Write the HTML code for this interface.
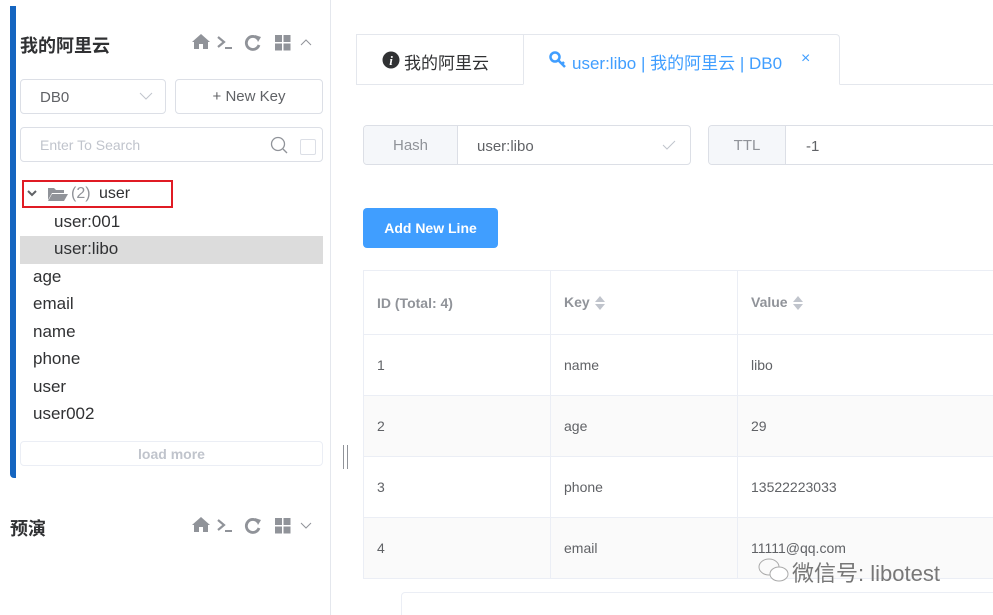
<!DOCTYPE html><html><head><meta charset="utf-8"><style>
*{box-sizing:border-box;margin:0;padding:0}
html,body{width:993px;height:615px;overflow:hidden}
body{background:#fff;font-family:"Liberation Sans","Noto Sans CJK SC",sans-serif;color:#606266;position:relative}
.a{position:absolute}
.bx{position:absolute;border:1px solid #dcdfe6;border-radius:4px;background:#fff}
.row{position:absolute;left:33px;font-size:17px;color:#303133}
td{border-right:1px solid #ebeef5;border-bottom:1px solid #ebeef5;padding-left:13px;font-size:14px;color:#606266}
.srt{display:inline-block;vertical-align:middle;margin-left:4px}
</style></head><body>
<div class="a" style="left:330px;top:0;width:1px;height:615px;background:#e4e7ed"></div>
<div class="a" style="left:10px;top:6px;width:6px;height:472px;background:#1565c0;border-radius:0 0 0 4px"></div>
<div class="a" style="left:20px;top:32px;font-size:18px;font-weight:bold;color:#303133">我的阿里云</div>
<svg class="a" style="left:192px;top:33px" width="125" height="18" viewBox="0 0 125 18" fill="#909399" stroke="#909399">
<path d="M0 9L9 1L18 9H16V16H11V11H7V16H2V9Z" stroke="none"/>
<path d="M26 4L32 9L26 14" fill="none" stroke-width="2.2"/><path d="M33 15H40" stroke-width="2"/>
<path d="M66 6A6.5 6.5 0 1 0 67 12" fill="none" stroke-width="2.8"/><path d="M63 2L69 4L66 9Z" stroke="none"/>
<rect x="83" y="2" width="7" height="7" stroke="none"/><rect x="91.5" y="2" width="7" height="7" stroke="none"/><rect x="83" y="10.5" width="7" height="7" stroke="none"/><rect x="91.5" y="10.5" width="7" height="7" stroke="none"/>
<path d="M109 12L114 7L119 12" fill="none" stroke-width="1"/></svg>
<div class="bx" style="left:20px;top:79px;width:146px;height:35px"><span class="a" style="left:19px;top:9px;font-size:15px">DB0</span><svg class="a" style="left:118px;top:11px" width="14" height="10"><path d="M1 2L7 8L13 2" fill="none" stroke="#c0c4cc"/></svg></div>
<div class="bx" style="left:175px;top:79px;width:148px;height:35px;text-align:center;padding-top:8px;font-size:15px;color:#606266">+ New Key</div>
<div class="bx" style="left:20px;top:127px;width:303px;height:35px"><span class="a" style="left:19px;top:9px;font-size:14px;color:#c0c4cc">Enter To Search</span><svg class="a" style="left:249px;top:8px" width="18" height="18"><circle cx="8" cy="8" r="6.5" fill="none" stroke="#909399" stroke-width="1.3"/><path d="M13 13L17 17" stroke="#909399" stroke-width="1.3"/></svg><div class="a" style="left:279px;top:11px;width:16px;height:16px;border:1px solid #dcdfe6;border-radius:2px"></div></div>
<div class="a" style="left:22px;top:180px;width:151px;height:28px;border:2px solid #e01b24"></div>
<svg class="a" style="left:26px;top:186px" width="44" height="16"><path d="M2 5L6 9L10 5" fill="none" stroke="#606266" stroke-width="2"/><path d="M22 2H28L30 4H38V7H26L22 14Z" fill="#909399"/><path d="M26 8H42L38 15H22Z" fill="#909399"/></svg>
<div class="a" style="left:71px;top:185px;font-size:16px;color:#909399">(2)</div>
<div class="a" style="left:99px;top:185px;font-size:16px;color:#303133">user</div>
<div class="row" style="left:54px;top:212px">user:001</div>
<div class="a" style="left:20px;top:236px;width:303px;height:28px;background:#dcdcdc"></div>
<div class="row" style="left:54px;top:239px">user:libo</div>
<div class="row" style="top:267px">age</div>
<div class="row" style="top:294px">email</div>
<div class="row" style="top:322px">name</div>
<div class="row" style="top:349px">phone</div>
<div class="row" style="top:377px">user</div>
<div class="row" style="top:404px">user002</div>
<div class="bx" style="left:20px;top:441px;width:303px;height:25px;border-color:#ebeef5;text-align:center;font-size:14px;font-weight:bold;color:#c0c4cc;padding-top:4px">load more</div>
<div class="a" style="left:10px;top:515px;font-size:18px;font-weight:bold;color:#303133">预演</div>
<svg class="a" style="left:192px;top:516px" width="125" height="18" viewBox="0 0 125 18" fill="#909399" stroke="#909399">
<path d="M0 9L9 1L18 9H16V16H11V11H7V16H2V9Z" stroke="none"/>
<path d="M26 4L32 9L26 14" fill="none" stroke-width="2.2"/><path d="M33 15H40" stroke-width="2"/>
<path d="M66 6A6.5 6.5 0 1 0 67 12" fill="none" stroke-width="2.8"/><path d="M63 2L69 4L66 9Z" stroke="none"/>
<rect x="83" y="2" width="7" height="7" stroke="none"/><rect x="91.5" y="2" width="7" height="7" stroke="none"/><rect x="83" y="10.5" width="7" height="7" stroke="none"/><rect x="91.5" y="10.5" width="7" height="7" stroke="none"/>
<path d="M109 7L114 12L119 7" fill="none" stroke-width="1"/></svg>
<div class="a" style="left:343px;top:445px;width:1px;height:24px;background:#909399"></div>
<div class="a" style="left:347px;top:445px;width:1px;height:24px;background:#909399"></div>
<div class="a" style="left:356px;top:84px;width:637px;height:1px;background:#e4e7ed"></div>
<div class="a" style="left:356px;top:34px;width:168px;height:51px;border:1px solid #e4e7ed;background:#fff"></div>
<svg class="a" style="left:382px;top:51px" width="18" height="18"><circle cx="9" cy="9" r="8.5" fill="#303133"/><text x="9" y="14" font-size="13" font-weight="bold" font-style="italic" fill="#fff" text-anchor="middle" font-family="Liberation Serif">i</text></svg>
<div class="a" style="left:404px;top:49px;font-size:17px;color:#303133">我的阿里云</div>
<div class="a" style="left:523px;top:34px;width:317px;height:51px;border:1px solid #e4e7ed;border-bottom:1px solid #fff;background:#fff;border-radius:0 4px 0 0"></div>
<svg class="a" style="left:549px;top:51px" width="20" height="18"><circle cx="6" cy="6" r="4.5" fill="none" stroke="#409eff" stroke-width="2.5"/><path d="M9 9L16 16M13 13L15 11" stroke="#409eff" stroke-width="2.5"/></svg>
<div class="a" style="left:572px;top:49px;font-size:17px;color:#409eff">user:libo | 我的阿里云 | DB0</div>
<div class="a" style="left:801px;top:50px;font-size:16px;color:#409eff">×</div>
<div class="bx" style="left:363px;top:125px;width:328px;height:40px;overflow:hidden"><div class="a" style="left:0;top:0;width:94px;height:38px;background:#f5f7fa;border-right:1px solid #dcdfe6;text-align:center;padding-top:11px;font-size:15px;color:#909399">Hash</div><span class="a" style="left:113px;top:12px;font-size:15px">user:libo</span><svg class="a" style="left:298px;top:13px" width="14" height="12"><path d="M1 6L5 10L13 2" fill="none" stroke="#c0c4cc"/></svg></div>
<div class="bx" style="left:708px;top:125px;width:300px;height:40px;overflow:hidden"><div class="a" style="left:0;top:0;width:77px;height:38px;background:#f5f7fa;border-right:1px solid #dcdfe6;text-align:center;padding-top:11px;font-size:15px;color:#909399">TTL</div><span class="a" style="left:97px;top:12px;font-size:15px">-1</span></div>
<div class="a" style="left:363px;top:208px;width:135px;height:40px;background:#409eff;border-radius:4px;color:#fff;font-size:14px;font-weight:bold;text-align:center;padding-top:12px">Add New Line</div>
<table class="a" style="left:363px;top:270px;width:640px;border-collapse:collapse;border-top:1px solid #ebeef5;border-left:1px solid #ebeef5">
<tr style="height:64px"><td style="width:187px;font-weight:bold;color:#909399">ID (Total: 4)</td><td style="width:187px;font-weight:bold;color:#909399">Key<svg class="srt" width="12" height="16"><path d="M1 7L6 1L11 7Z M1 9L6 15L11 9Z" fill="#c0c4cc"/></svg></td><td style="font-weight:bold;color:#909399">Value<svg class="srt" width="12" height="16"><path d="M1 7L6 1L11 7Z M1 9L6 15L11 9Z" fill="#c0c4cc"/></svg></td></tr>
<tr style="height:61px"><td>1</td><td>name</td><td>libo</td></tr>
<tr style="height:61px;background:#fafafa"><td>2</td><td>age</td><td>29</td></tr>
<tr style="height:61px"><td>3</td><td>phone</td><td>13522223033</td></tr>
<tr style="height:61px;background:#fafafa"><td>4</td><td>email</td><td>11111@qq.com</td></tr>
</table>
<div class="a" style="left:401px;top:592px;width:600px;height:40px;border:1px solid #ebeef5;border-radius:4px"></div>
<svg class="a" style="left:757px;top:556px" width="34" height="30"><ellipse cx="12" cy="11" rx="10" ry="8" fill="none" stroke="#aaa"/><ellipse cx="22" cy="18" rx="9" ry="7" fill="#fff" stroke="#aaa"/></svg>
<div class="a" style="left:792px;top:556px;font-size:22px;color:#777">微信号: libotest</div>
</body></html>
